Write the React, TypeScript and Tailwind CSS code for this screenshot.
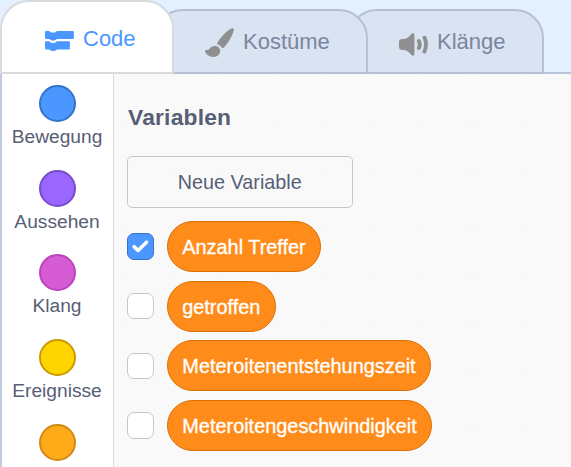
import React from 'react';

const categories = [
  { name: 'Bewegung', color: 'bg-[#4c97ff] border-[#3373cc]' },
  { name: 'Aussehen', color: 'bg-[#9966ff] border-[#774dcb]' },
  { name: 'Klang', color: 'bg-[#d65cd6] border-[#bd42bd]' },
  { name: 'Ereignisse', color: 'bg-[#ffd500] border-[#cc9900]' },
  { name: '', color: 'bg-[#ffab19] border-[#cf8b17]' },
];

const variables = [
  { name: 'Anzahl Treffer', checked: true, width: 'w-[154.500px]' },
  { name: 'getroffen', checked: false, width: 'w-[109px]' },
  { name: 'Meteroitenentstehungszeit', checked: false, width: 'w-[264.500px]' },
  { name: 'Meteroitengeschwindigkeit', checked: false, width: 'w-[265.500px]' },
];

function CodeIcon() {
  return (
    <svg className="h-[21px] w-[29px]" viewBox="0 0 29 21" fill="#4c97ff">
      <path d="M.9 0h2.700c.8 0 1.200.3 1.800.9.5.5.9.7 1.600.7h2c.8 0 1.200-.2 1.700-.7.6-.6 1-.9 1.800-.9H28a.9.9 0 0 1 .9.9v6.100a.9.9 0 0 1-.9.9H12.700c-.8 0-1.200.3-1.800.9-.5.4-.9.600-1.700.600H7.100c-.8 0-1.200-.2-1.700-.600-.6-.6-1-.9-1.800-.9H.9A.9.9 0 0 1 0 7V.9A.9.9 0 0 1 .9 0Z" />
      <path d="M.9 10.300h2.700c.8 0 1.200.3 1.800.9.5.5.9.7 1.600.7h2c.8 0 1.200-.2 1.700-.7.6-.6 1-.9 1.800-.9H24a.9.9 0 0 1 .9.9v6.300a.9.9 0 0 1-.9.9H12.700c-.8 0-1.200.3-1.800.9-.5.500-.9.800-1.700.8H7.100c-.8 0-1.200-.3-1.700-.8-.6-.6-1-.9-1.800-.9H.9a.9.9 0 0 1-.9-.9v-6.300a.9.9 0 0 1 .9-.9Z" />
    </svg>
  );
}

function BrushIcon() {
  return (
    <svg className="h-[29px] w-[29px]" viewBox="0 0 29 29" fill="#8f8f8f">
      <path d="M27.600.3c1.200.1 1.400 1.200 1 2.600-.8 3.700-4.800 11.100-8.700 15.500-1 1.100-2.100 2.100-3 1.400-.9-1.500-2.300-2.700-4.200-3.200-.9-.4-.7-1.400-.1-2.200C15.600 9.600 21.800 2.500 25.800.8c.7-.3 1.200-.5 1.800-.5Z" />
      <path d="M9.900 18c3 .1 5.300 2 5.300 5 0 3.400-2.900 5.900-6.900 5.900-3.700 0-7-1.600-8.100-4.800-.5-1.300-.1-2.200.9-2.100 1.400.1 2.300 0 3.400-1.300C6 19 7.400 17.900 9.900 18Z" />
    </svg>
  );
}

function SoundIcon() {
  return (
    <svg className="h-[23px] w-[29px]" viewBox="0 0 29 23">
      <path d="M3 6h2.400c2.500-.1 4.600-2.400 6.800-4.800C13.600-.3 15.400.2 15.400 2.200v18.600c0 2-1.800 2.500-3.200 1-2.200-2.300-4.300-4.600-6.800-4.700H3c-2 0-3-1-3-3V9c0-2 1-3 3-3Z" fill="#8f8f8f" />
      <path d="M19.800 8c1.200 2.200 1.200 4.900 0 7.100M25.500 4.600c2 4.600 2 9.300 0 13.900" fill="none" stroke="#8f8f8f" strokeWidth="3.800" strokeLinecap="round" />
    </svg>
  );
}

export default function App() {
  return (
    <div className="flex h-[467px] w-[571px] flex-col overflow-hidden bg-[#e3f0ff] font-['Liberation_Sans',Arial,sans-serif] text-[#575e75]">
      <nav className="flex h-[74px] shrink-0 items-end bg-[linear-gradient(to_top,#b9c5d8_2px,transparent_2px)] text-[22px] leading-[26px]">
        <div className="relative z-20 flex h-[74px] w-[174px] items-center gap-[9px] rounded-t-[29px] border-2 border-[#d9dadc] bg-white pl-[43px] pt-1 text-[#4c97ff]">
          <span className="pt-[4px]"><CodeIcon /></span>
          <span className="pb-[1px]">Code</span>
        </div>
        <div className="relative z-10 -ml-5 flex h-[65px] w-[214px] items-center gap-[9px] rounded-t-[29px] border-2 border-[#b7c0d2] bg-[#d9e3f2] pl-[49px] text-[#7c859c]">
          <span className="pt-[2px]"><BrushIcon /></span>
          <span>Kostüme</span>
        </div>
        <div className="-ml-5 flex h-[65px] w-[196px] items-center gap-[9px] rounded-t-[29px] border-2 border-[#b7c0d2] bg-[#d9e3f2] pl-[49px] text-[#7c859c]">
          <span className="pt-[5px]"><SoundIcon /></span>
          <span>Klänge</span>
        </div>
      </nav>
      <div className="flex min-h-0 flex-1">
        <aside className="flex w-[114px] shrink-0 flex-col items-center border-l-2 border-r border-l-[#bfc9df] border-r-[#d9d9d9] bg-white pt-[11px]">
          {categories.map((c, i) => (
            <div key={i} className="flex h-[84.700px] shrink-0 flex-col items-center gap-[3px]">
              <div className={`h-[37px] w-[37px] shrink-0 rounded-full border-2 ${c.color}`} />
              {c.name && <span className="-ml-px text-[19.200px] leading-[24px]">{c.name}</span>}
            </div>
          ))}
        </aside>
        <main className="flex-1 bg-[#f9f9f9] bg-[radial-gradient(circle_at_10px_1px,#f5f5f5_1px,transparent_1.500px)] bg-[length:49.700px_50px] pl-[13px] pt-[29px]">
          <h1 className="pl-px text-[22.800px] font-bold leading-[28px] tracking-[0.200px]">Variablen</h1>
          <button className="mt-[25px] block h-[52px] w-[225.500px] rounded-[5px] border-[1.500px] border-[#c6c6c6] text-[19.800px] leading-[24px]">Neue Variable</button>
          <div className="mt-[13px] flex flex-col gap-[8.700px]">
            {variables.map((v) => (
              <div key={v.name} className="flex h-[51px] items-center">
                <span className={`flex h-[26.500px] w-[26.500px] items-center justify-center rounded-[7px] border-[1.500px] ${v.checked ? 'border-[#3373cc] bg-[#4c97ff]' : 'border-[#c6c6c6] bg-white'}`}>
                  {v.checked && (
                    <svg className="h-[13px] w-[17px]" viewBox="0 0 17 13" fill="none" stroke="white" strokeWidth="3.500" strokeLinecap="round" strokeLinejoin="round">
                      <path d="M2.200 6.700 6 10.500 14.500 2.200" />
                    </svg>
                  )}
                </span>
                <span className={`ml-[13px] flex h-[51px] items-center justify-center whitespace-nowrap rounded-full border border-[#db6e00] bg-[#ff8c1a] pl-[0.500px] pt-[2.500px] text-[19.900px] text-white [-webkit-text-stroke:0.300px_white] ${v.width}`}>
                  {v.name}
                </span>
              </div>
            ))}
          </div>
        </main>
      </div>
    </div>
  );
}
